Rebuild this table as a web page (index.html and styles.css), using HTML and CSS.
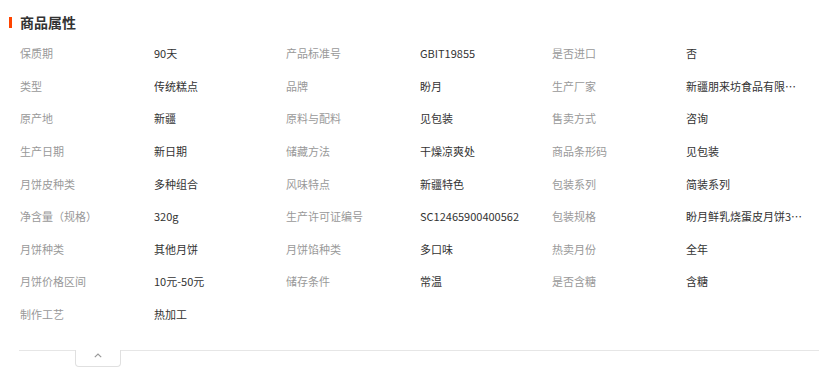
FILE: index.html
```html
<!DOCTYPE html>
<html lang="zh-CN">
<head>
<meta charset="utf-8">
<title>商品属性</title>
<link rel="stylesheet" href="styles.css">
</head>
<body>
<div class="panel">
  <h2 class="title">商品属性</h2>
  <div class="attrs">
    <span class="k">保质期</span><span class="v">90天</span>
    <span class="k">产品标准号</span><span class="v">GBIT19855</span>
    <span class="k">是否进口</span><span class="v">否</span>

    <span class="k">类型</span><span class="v">传统糕点</span>
    <span class="k">品牌</span><span class="v">盼月</span>
    <span class="k">生产厂家</span><span class="v">新疆朋来坊食品有限公司</span>

    <span class="k">原产地</span><span class="v">新疆</span>
    <span class="k">原料与配料</span><span class="v">见包装</span>
    <span class="k">售卖方式</span><span class="v">咨询</span>

    <span class="k">生产日期</span><span class="v">新日期</span>
    <span class="k">储藏方法</span><span class="v">干燥凉爽处</span>
    <span class="k">商品条形码</span><span class="v">见包装</span>

    <span class="k">月饼皮种类</span><span class="v">多种组合</span>
    <span class="k">风味特点</span><span class="v">新疆特色</span>
    <span class="k">包装系列</span><span class="v">简装系列</span>

    <span class="k">净含量（规格）</span><span class="v">320g</span>
    <span class="k">生产许可证编号</span><span class="v">SC12465900400562</span>
    <span class="k">包装规格</span><span class="v">盼月鲜乳烧蛋皮月饼320g</span>

    <span class="k">月饼种类</span><span class="v">其他月饼</span>
    <span class="k">月饼馅种类</span><span class="v">多口味</span>
    <span class="k">热卖月份</span><span class="v">全年</span>

    <span class="k">月饼价格区间</span><span class="v">10元-50元</span>
    <span class="k">储存条件</span><span class="v">常温</span>
    <span class="k">是否含糖</span><span class="v">含糖</span>

    <span class="k">制作工艺</span><span class="v">热加工</span>
  </div>
  <div class="footer">
    <button class="toggle" type="button" aria-label="收起">
      <svg width="8" height="5" viewBox="0 0 8 5"><polyline points="0.8,4.2 4,1 7.2,4.2" fill="none" stroke="#9a9a9a" stroke-width="1.2"/></svg>
    </button>
  </div>
</div>
</body>
</html>
```
FILE: styles.css
```css
html, body {
  margin: 0;
  padding: 0;
  background: #fff;
}
body {
  font-family: "Noto Sans CJK SC", "Liberation Sans", sans-serif;
  font-size: 11px;
  color: #333;
}
.panel {
  width: 800px;
  padding-left: 19px;
}
.title {
  position: relative;
  margin: 0;
  height: 36.7px;
  padding: 13px 0 0 1px;
  box-sizing: border-box;
  font-size: 14px;
  font-weight: bold;
  color: #333;
  line-height: 18px;
}
.title::before {
  content: "";
  position: absolute;
  left: -10px;
  top: 17px;
  width: 3px;
  height: 11px;
  background: #ff4400;
}
.attrs {
  display: grid;
  grid-template-columns: 134px 132px 134px 132px 134px 132px;
  grid-auto-rows: 32.625px;
  padding-left: 1px;
  align-items: center;
}
.k {
  color: #999;
  white-space: nowrap;
}
.v {
  color: #333;
  white-space: nowrap;
  overflow: hidden;
  text-overflow: ellipsis;
  padding-right: 14px;
}
.footer {
  margin-top: 19.5px;
  border-top: 1px solid #e6e6e6;
  height: 20px;
}
.toggle {
  display: flex;
  align-items: center;
  justify-content: center;
  margin: -1px 0 0 56px;
  width: 46px;
  height: 17px;
  padding: 0 0 5px;
  background: #fff;
  border: 1px solid #e0e0e0;
  border-top: none;
  border-radius: 0 0 4px 4px;
  box-sizing: border-box;
  cursor: pointer;
}
```
